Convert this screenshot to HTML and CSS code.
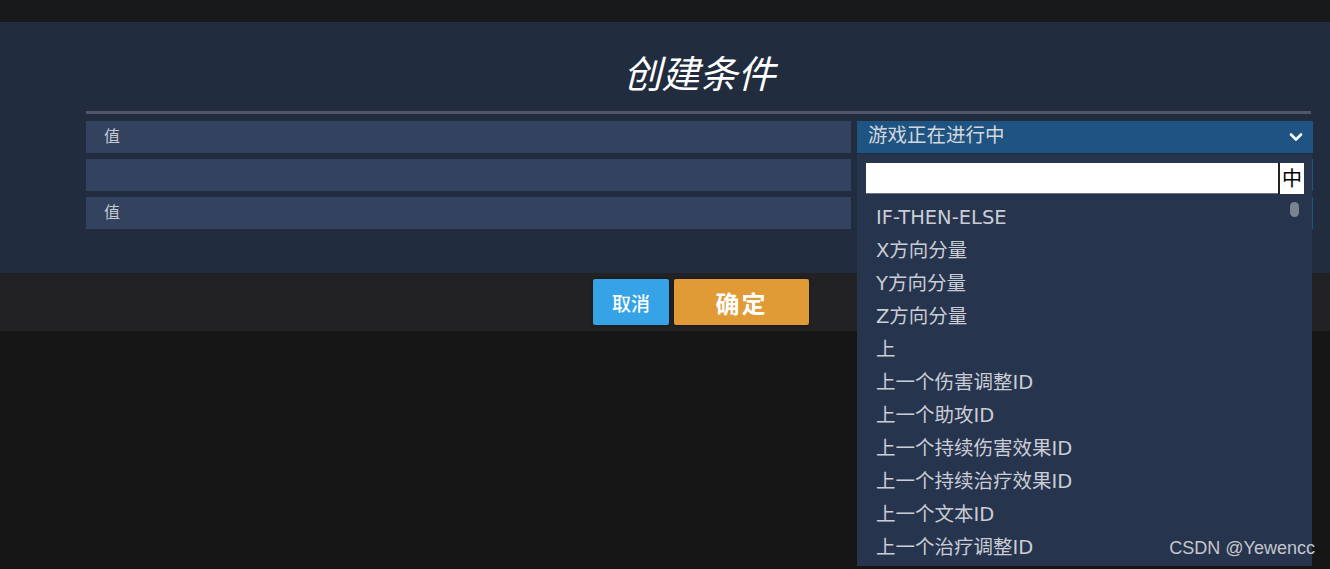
FILE: index.html
```html
<!DOCTYPE html>
<html lang="zh-CN">
<head>
    <meta charset="UTF-8">
    <title>创建条件</title>
    <link rel="stylesheet" href="styles.css">
</head>
<body>
    <div class="topbar"></div>
    <div class="modal">
        <h1 class="title">创建条件</h1>
        <div class="divider"></div>
        <div class="rows">
            <div class="cell">值</div>
            <div class="select">
                <span>游戏正在进行中</span>
                <svg class="chevron" width="14" height="10" viewBox="0 0 14 10">
                    <path d="M2 2.5 L7 7.5 L12 2.5" fill="none" stroke="#fff" stroke-width="2.6" stroke-linecap="round" stroke-linejoin="round"/>
                </svg>
            </div>
            <div class="cell"></div>
            <div class="select"></div>
            <div class="cell">值</div>
            <div class="select"></div>
        </div>
    </div>
    <div class="footer">
        <button type="button" class="btn btn-cancel">取消</button>
        <button type="button" class="btn btn-ok">确定</button>
    </div>

    <div class="dropdown">
        <div class="search">
            <input type="text" class="search-input">
            <span class="ime">中</span>
        </div>
        <div class="scroll-thumb"></div>
        <ul class="options">
            <li>IF-THEN-ELSE</li>
            <li>X方向分量</li>
            <li>Y方向分量</li>
            <li>Z方向分量</li>
            <li>上</li>
            <li>上一个伤害调整ID</li>
            <li>上一个助攻ID</li>
            <li>上一个持续伤害效果ID</li>
            <li>上一个持续治疗效果ID</li>
            <li>上一个文本ID</li>
            <li>上一个治疗调整ID</li>
        </ul>
    </div>

    <div class="watermark">CSDN @Yewencc</div>
</body>
</html>
```

FILE: styles.css
```css
body {
    margin: 0;
    height: 569px;
    overflow: hidden;
    background-color: #161616;
    font-family: "Noto Sans CJK SC", "Noto Sans", sans-serif;
    color: #c9cdd5;
}
.topbar {
    height: 22px;
    background-color: #171819;
}
.modal {
    background-color: #222c3f;
    padding: 0 17px 44px 86px;
}
.title {
    margin: 0;
    height: 89px;
    line-height: 100px;
    text-align: center;
    font-size: 38px;
    font-weight: normal;
    font-style: italic;
    color: #fff;
}
.divider {
    height: 3px;
    margin-right: 2px;
    background-color: #4f5769;
}
.rows {
    display: grid;
    grid-template-columns: 765px 456px;
    grid-auto-rows: 32px;
    column-gap: 6px;
    row-gap: 6px;
    margin-top: 7px;
}
.cell {
    background-color: #33425f;
    padding-left: 18px;
    font-size: 16px;
    line-height: 28px;
    color: #c4c9d2;
}
.select {
    background-color: #1f5381;
    display: flex;
    align-items: center;
    justify-content: space-between;
    padding: 0 10px 0 11px;
    font-size: 19.5px;
    color: #d3d7de;
}
.select span {
    margin-top: -7px;
}
.footer {
    height: 58px;
    background-color: #222124;
    display: flex;
    justify-content: center;
    align-items: center;
    gap: 5px;
    padding-left: 89px;
    padding-right: 17px;
}
.btn {
    height: 46px;
    border: none;
    border-radius: 2px;
    color: #fff;
    font-family: "Noto Sans CJK SC", sans-serif;
    padding: 0;
    box-shadow: 0 0 3px rgba(0, 0, 0, 0.5);
}
.btn-cancel {
    width: 76px;
    background-color: #35a3e6;
    font-size: 19px;
    font-weight: 500;
}
.btn-ok {
    width: 135px;
    background-color: #e09a36;
    font-size: 24px;
    font-weight: bold;
    letter-spacing: 2px;
}
.dropdown {
    position: absolute;
    left: 857px;
    top: 154px;
    width: 455px;
    height: 412px;
    background-color: #27344e;
}
.search {
    display: flex;
    margin: 9px 8px 0 9px;
    height: 31px;
}
.search-input {
    flex: 1;
    border: none;
    border-bottom: 1px solid #6a7284;
    background-color: #fff;
    margin: 0;
    padding: 0;
    outline: none;
}
.ime {
    width: 24px;
    background-color: #fff;
    border-left: 2px solid #222;
    color: #000;
    font-size: 20px;
    line-height: 30px;
    text-align: center;
}
.scroll-thumb {
    position: absolute;
    left: 433px;
    top: 48px;
    width: 9px;
    height: 15px;
    border-radius: 5px;
    background-color: #7b8291;
}
.options {
    list-style: none;
    margin: 0;
    padding: 7px 0 0 19px;
}
.options li {
    height: 33px;
    line-height: 33px;
    font-family: "DejaVu Sans", "Noto Sans CJK SC", sans-serif;
    font-size: 19.5px;
    color: #c9cdd5;
}
.watermark {
    position: absolute;
    right: 15px;
    top: 538px;
    font-family: "Liberation Sans", Arial, sans-serif;
    font-size: 18px;
    color: #c5c7cb;
}
```
